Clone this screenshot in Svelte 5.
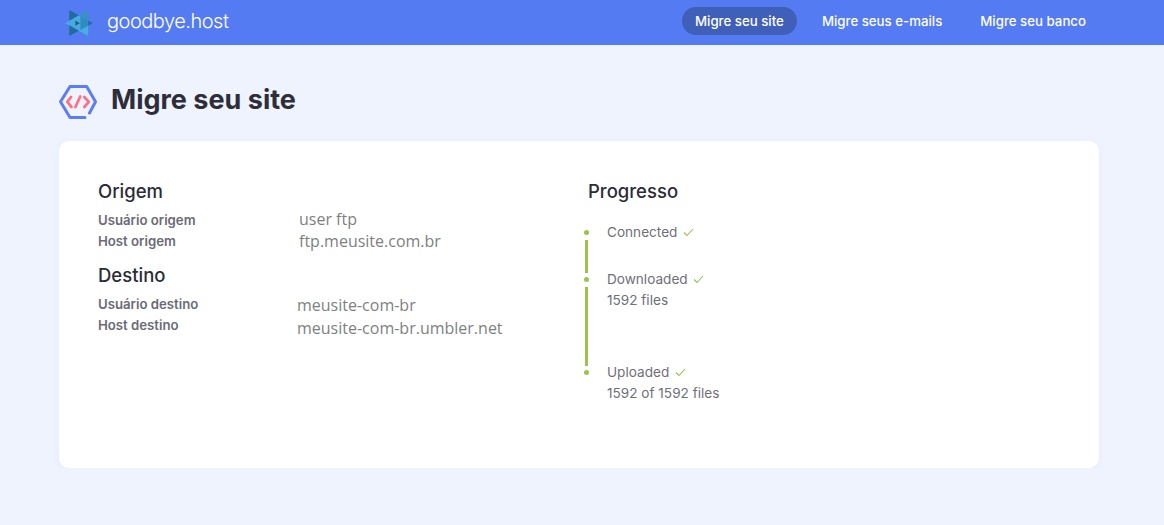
<script>
  let navItems = [
    { label: 'Migre seu site', active: true },
    { label: 'Migre seus e-mails', active: false },
    { label: 'Migre seu banco', active: false }
  ];
</script>

<header class="topbar">
  <div class="brand">
    <svg class="logo" width="28" height="26" viewBox="0 0 27.3 25.7">
      <!-- two crossed triangles, split in facets -->
      <polygon points="4,10.7 13.4,5.3 22.7,10.4 22.7,15.6 13.4,20.6 4,15" fill="#47a9de" />
      <polygon points="4,0 4,10.7 13.4,5.3" fill="#1f6d9f" />
      <polygon points="22.7,0 22.7,10.4 13.4,5.3" fill="#3a90c8" />
      <polygon points="0,13 4,10.7 4,15" fill="#49ade0" />
      <polygon points="22.7,10.4 27.3,13 22.7,15.6" fill="#1f6d9f" />
      <polygon points="4,25.7 4,15 13.4,20.6" fill="#1f6d9f" />
      <polygon points="22.7,25.7 22.7,15.6 13.4,20.6" fill="#49ade0" />
      <polygon points="15,6.2 22.7,10.4 22.7,15.6 15,19.8" fill="#2f8cc2" />
      <polygon points="10,10.5 14.5,13 10,15.5" fill="#1d5f88" />
    </svg>
    <span class="wordmark">goodbye.host</span>
  </div>
  <nav class="menu">
    {#each navItems as item}
      <span class="menu-item" class:active={item.active}>{item.label}</span>
    {/each}
  </nav>
</header>

<main class="page">
  <div class="page-title">
    <svg width="38" height="34" viewBox="0 0 38 34" fill="none">
      <path d="M26 32.5H11L1.5 16.7 11 1.5h16.7l8.8 15.2-6 11.3" stroke="#5b7ff2" stroke-width="3" stroke-linecap="round" stroke-linejoin="round" />
      <path d="M12 12 8.3 16.9l4.2 5.1M25.3 12l4.5 4.9-4.5 5.1M21.2 11.5 16.4 22" stroke="#fb7185" stroke-width="2.8" stroke-linecap="round" stroke-linejoin="round" />
    </svg>
    <h1>Migre seu site</h1>
  </div>

  <section class="card">
    <div class="col-left">
      <h2>Origem</h2>
      <div class="pairs">
        <div class="labels">
          <div>Usuário origem</div>
          <div>Host origem</div>
        </div>
        <div class="values origin">
          <div class="v1">user ftp</div>
          <div class="v2">ftp.meusite.com.br</div>
        </div>
      </div>
      <h2 class="second">Destino</h2>
      <div class="pairs dest">
        <div class="labels">
          <div>Usuário destino</div>
          <div>Host destino</div>
        </div>
        <div class="values">
          <div>meusite-com-br</div>
          <div>meusite-com-br.umbler.net</div>
        </div>
      </div>
    </div>
    <div class="col-right">
      <h2>Progresso</h2>
      <ul class="timeline">
        <li class="step s1">
          <span class="dot"></span>
          <span class="line"></span>
          <div>Connected {@render check()}</div>
        </li>
        <li class="step s2">
          <span class="dot"></span>
          <span class="line"></span>
          <div>Downloaded {@render check()}</div>
          <div>1592 files</div>
        </li>
        <li class="step">
          <span class="dot"></span>
          <div>Uploaded {@render check()}</div>
          <div>1592 of 1592 files</div>
        </li>
      </ul>
    </div>
  </section>
</main>

{#snippet check()}
  <svg class="check" width="11" height="9" viewBox="0 0 11 9" fill="none">
    <path d="M1 4.5 4 7.5 10 1" stroke="#9dbd52" stroke-width="1.1" />
  </svg>
{/snippet}

<style>
  :global(body) {
    margin: 0;
    background: #eff3fe;
    font-family: Inter, 'Noto Sans', sans-serif;
  }

  .topbar {
    height: 45px;
    background: #557bf2;
    display: flex;
    align-items: center;
    justify-content: space-between;
    padding: 0 65px 3px 65px;
    box-sizing: border-box;
  }
  .brand {
    display: flex;
    align-items: center;
    gap: 14px;
  }
  .logo {
    margin-top: 3px;
  }
  .wordmark {
    color: #fff;
    font-size: 20px;
    font-weight: 300;
    letter-spacing: -0.5px;
  }
  .menu {
    display: flex;
    gap: 12px;
  }
  .menu-item {
    color: #fff;
    font-size: 13.25px;
    font-weight: 500;
    line-height: 28px;
    padding: 0 13px;
    border-radius: 14px;
  }
  .menu-item.active {
    background: #3f5fb9;
  }

  .page {
    padding: 40px 65px 0 59px;
  }
  .page-title {
    display: flex;
    align-items: flex-start;
    gap: 14px;
    margin-bottom: 22px;
  }
  h1 {
    margin: 0;
    font-size: 27px;
    font-weight: 700;
    line-height: 30px;
    color: #2e2e3a;
  }

  .card {
    height: 327px;
    background: #fff;
    border-radius: 10px;
    box-shadow: 0 2px 8px rgba(85, 123, 242, 0.06);
    box-sizing: border-box;
    padding: 39px 39px;
    display: flex;
  }
  .col-left {
    width: 490px;
  }
  h2 {
    margin: 0;
    font-size: 18.5px;
    font-weight: 500;
    line-height: 22px;
    color: #2c2c36;
  }
  h2.second {
    margin-top: 12px;
  }
  .pairs {
    margin-top: 8px;
    display: flex;
  }
  .labels {
    width: 199px;
    font-size: 13.2px;
    font-weight: 600;
    color: #6b6b76;
    line-height: 21px;
  }
  .values {
    font-family: 'Open Sans', sans-serif;
    font-size: 16px;
    color: #7f7f7f;
    line-height: 23px;
  }
  .values.origin {
    line-height: 22px;
    margin-top: -2px;
    margin-bottom: -1px;
  }
  .v1 { margin-left: 2px; }
  .v2 { margin-left: 2px; }

  .timeline {
    list-style: none;
    margin: 20px 0 0;
    padding: 0 0 0 19px;
    font-size: 13.6px;
    color: #6f6f78;
    line-height: 21px;
  }
  .step {
    position: relative;
  }
  .s1 { height: 47px; }
  .s2 { height: 93px; }
  .dot {
    position: absolute;
    left: -23px;
    top: 8px;
    width: 5px;
    height: 5px;
    border-radius: 50%;
    background: #9bc24a;
  }
  .line {
    position: absolute;
    left: -22px;
    top: 18px;
    bottom: -4px;
    width: 3px;
    background: #9bc24a;
  }
  .check {
    margin-left: 1.5px;
  }
</style>
